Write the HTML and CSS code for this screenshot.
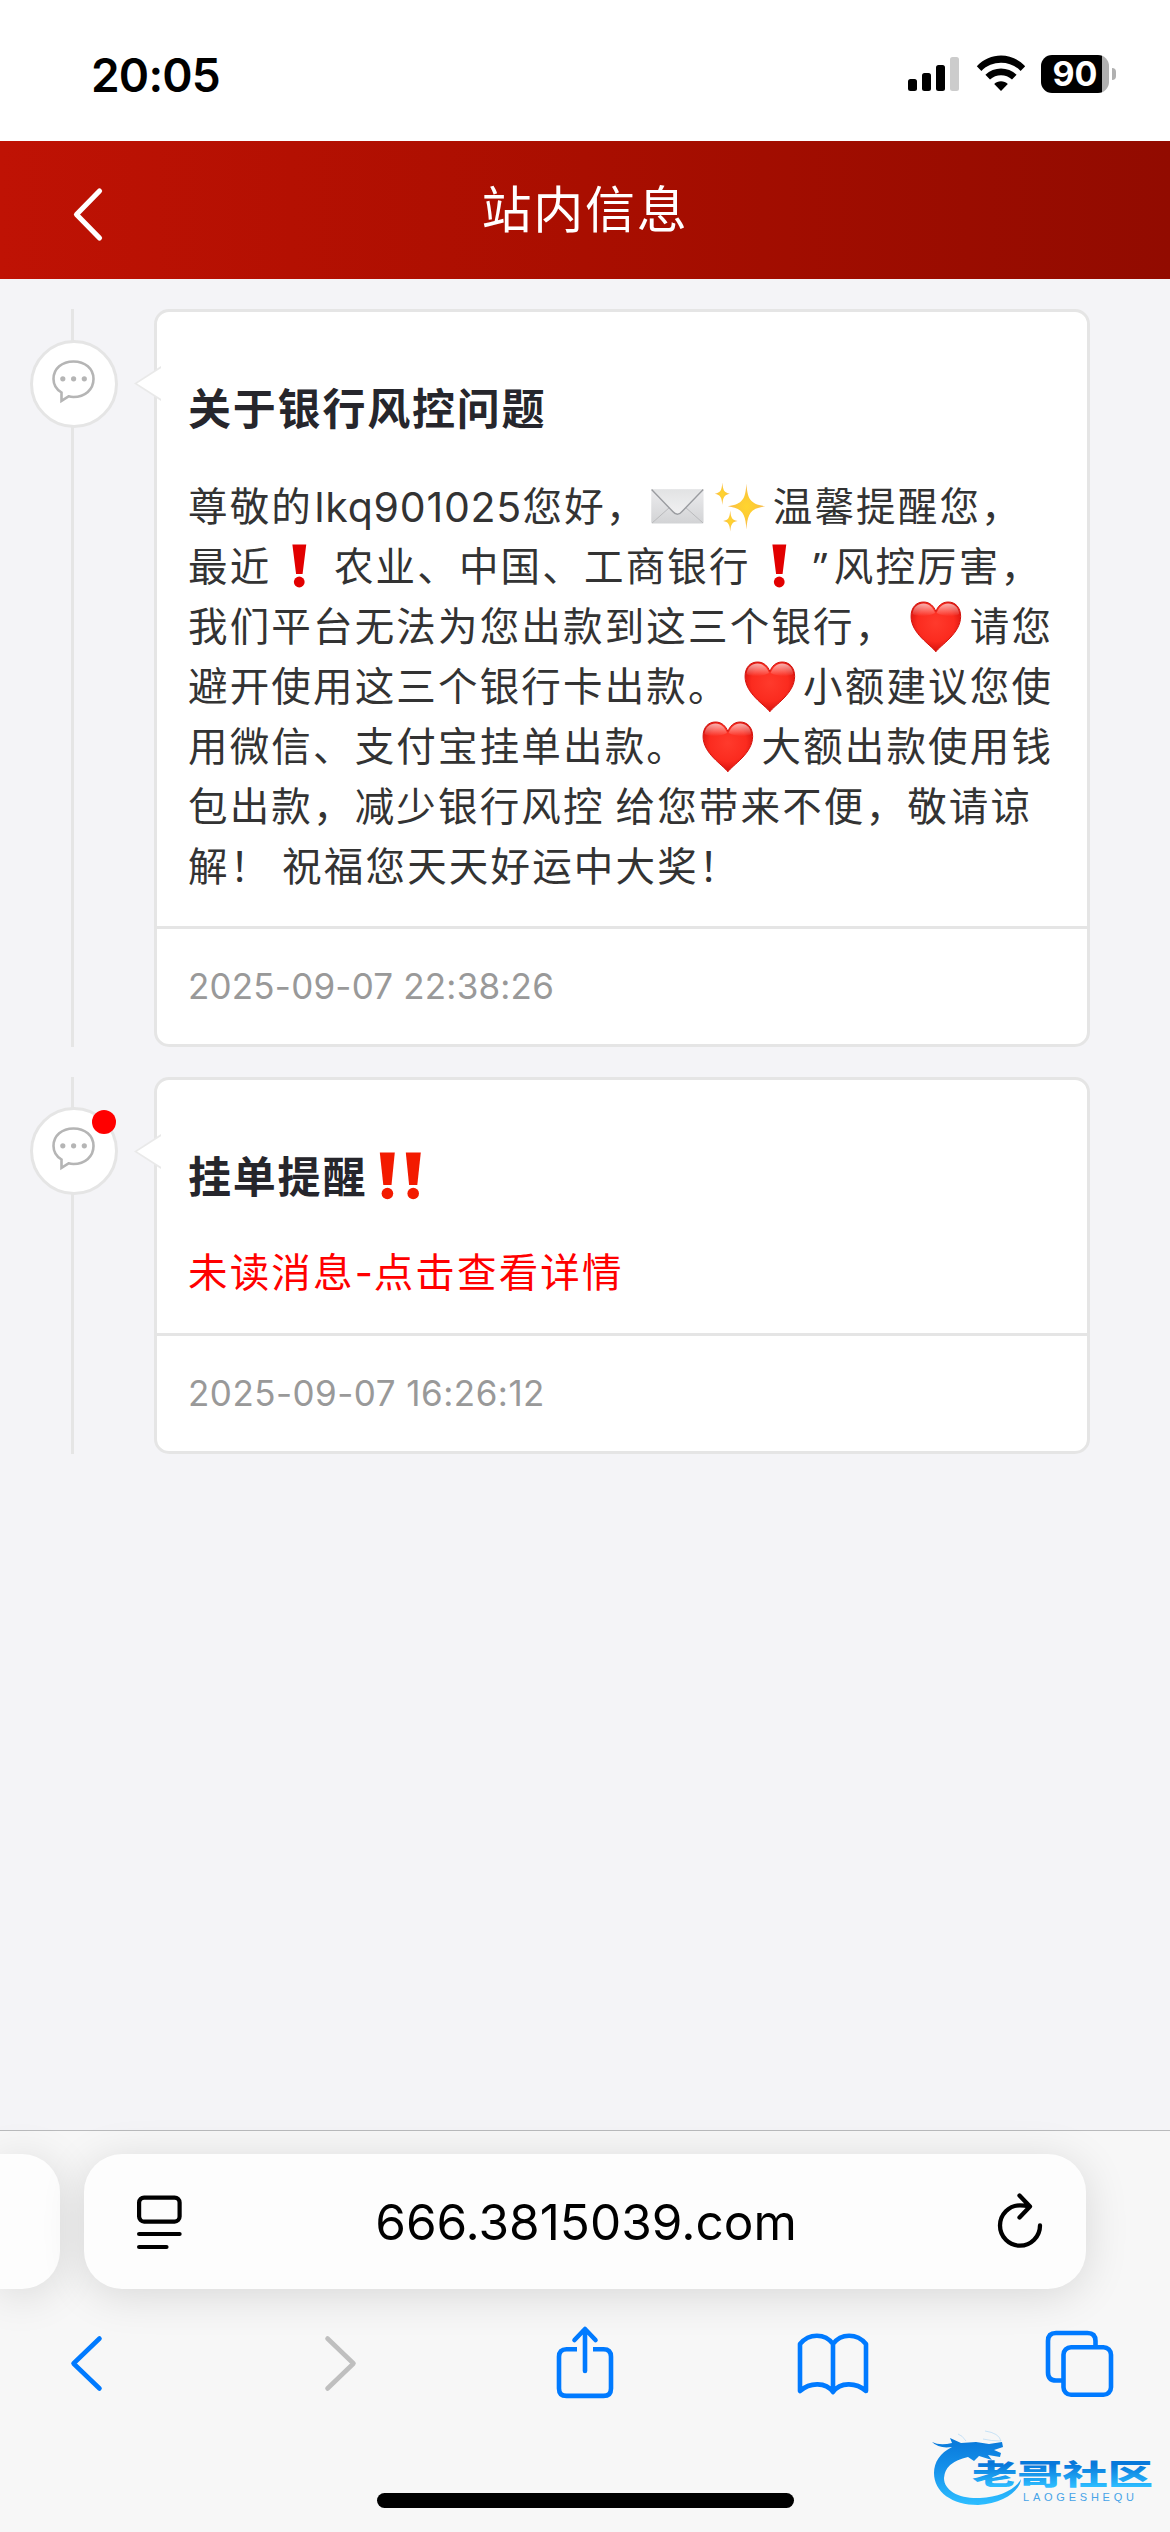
FILE: index.html
```html
<!DOCTYPE html>
<html lang="zh-CN">
<head>
<meta charset="utf-8">
<title>站内信息</title>
<link rel="stylesheet" href="styles.css">
</head>
<body>
<svg class="defs" width="0" height="0" aria-hidden="true">
  <defs>
    <radialGradient id="heartFill" cx="50%" cy="42%" r="62%">
      <stop offset="0" stop-color="#ff3a2c"/><stop offset=".6" stop-color="#fb2b1f"/><stop offset="1" stop-color="#cf0c08"/>
    </radialGradient>
    <linearGradient id="heartShine" x1="0" y1="0" x2="0" y2="1">
      <stop offset="0" stop-color="#fff" stop-opacity=".65"/><stop offset="1" stop-color="#fff" stop-opacity="0"/>
    </linearGradient>
    <linearGradient id="paper" x1="0" y1="0" x2="0" y2="1">
      <stop offset="0" stop-color="#ececee"/><stop offset="1" stop-color="#d2d3d5"/>
    </linearGradient>
    <linearGradient id="flap" x1="0" y1="0" x2="0" y2="1">
      <stop offset="0" stop-color="#e2e3e4"/><stop offset="1" stop-color="#f1f1f2"/>
    </linearGradient>
    <radialGradient id="gold">
      <stop offset="0" stop-color="#ffd52e"/><stop offset=".45" stop-color="#fdcb35"/><stop offset="1" stop-color="#f7b955"/>
    </radialGradient>
    <symbol id="heart" viewBox="0 0 62.5 60">
      <path d="M28.8 54.8C24 48 4 36.500 4 19.500C4 10 9.500 5 16.500 5C23 5 27 9.500 28.800 14.500C30.600 9.500 34.600 5 41.100 5C48 5 53.600 10 53.600 19.500C53.600 36.500 33.600 48 28.800 54.800Z" fill="url(#heartFill)" stroke="#d3120c" stroke-width="1"/>
      <path d="M5.500 17C6 10 11 6.500 16.500 6.500C22 6.500 26 10.500 28 16C20 20 10 20 5.500 17Z" fill="url(#heartShine)"/>
      <path d="M52.100 17C51.600 10 46.600 6.500 41.100 6.500C35.600 6.500 31.600 10.500 29.600 16C37.600 20 47.600 20 52.100 17Z" fill="url(#heartShine)"/>
    </symbol>
    <symbol id="bang" viewBox="0 0 62.5 60">
      <path d="M21.300 7.500H35.200L31.500 37H25Z" fill="#e20000"/><circle cx="28.200" cy="45" r="5.400" fill="#e20000"/>
    </symbol>
    <symbol id="envelope" viewBox="0 0 62.5 60">
      <rect x="3.200" y="12" width="52.300" height="34.500" rx="1.500" fill="url(#paper)"/>
      <path d="M4 46L22 30M55 46L37 30" stroke="#b9babc" stroke-width="1" fill="none"/>
      <path d="M3.500 12.500H55.200L34 34.500Q29.300 40 24.700 34.500Z" fill="url(#flap)"/>
      <path d="M3.500 12.500L24.700 34.500Q29.300 40 34 34.500L55.200 12.500" fill="none" stroke="#9a9ca0" stroke-width="1.400"/>
    </symbol>
    <symbol id="sparkles" viewBox="0 0 62.5 60">
      <g fill="url(#gold)">
        <path d="M36.400 6.500C37.500 22 40 27 55.200 29.300C40 31.500 37.500 37 36.400 52.500C35.300 37 33 31.500 17.800 29.300C33 27 35.300 22 36.400 6.500Z"/>
        <path d="M12.300 5.500C13 13.500 14 15.500 19.800 16.700C14 18 13 20 12.300 28C11.600 20 10.600 18 4.800 16.700C10.600 15.500 11.600 13.500 12.300 5.500Z"/>
        <path d="M20.200 33.500C20.900 41 22 43 27.500 44C22 45.200 20.900 47 20.200 54.500C19.500 47 18.500 45.200 13 44C18.500 43 19.500 41 20.200 33.500Z"/>
      </g>
    </symbol>
    <symbol id="chat" viewBox="0 0 88 88">
      <g fill="none" stroke="#b5b5b5" stroke-width="2.600" stroke-linejoin="miter">
        <path d="M31.500 52.500V60.800L38.500 56.300C40.500 56.900 42 57 43.500 57C55 57 63.500 49.500 63.500 39C63.500 28.500 55 21.500 43.500 21.500C32 21.500 23.500 28.500 23.500 39C23.500 45 26.500 49.500 31.500 52.500Z"/>
      </g>
      <g fill="#b5b5b5"><circle cx="32.800" cy="38.800" r="2.600"/><circle cx="43.600" cy="38.800" r="2.600"/><circle cx="54.300" cy="38.800" r="2.600"/></g>
    </symbol>
  </defs>
</svg>

<header class="status">
  <div class="time">20:05</div>
  <div class="status-icons">
    <svg width="52" height="40" viewBox="0 0 52 40">
      <rect x="0" y="25" width="9" height="12" rx="2.500"/><rect x="14" y="19" width="9" height="18" rx="2.500"/><rect x="28" y="11" width="9" height="26" rx="2.500"/><rect x="42" y="3" width="9" height="34" rx="2.500" fill="#ccc"/>
    </svg>
    <svg width="50" height="40" viewBox="0 0 50 40">
      <path d="M25 37L18.200 29.900C20 28.200 22.400 27.200 25 27.200C27.600 27.200 30 28.200 31.800 29.900Z"/>
      <path d="M9.400 20.800C18 12.400 32 12.400 40.600 20.800L36 25.600C30 19.800 20 19.800 14 25.600Z"/>
      <path d="M.8 12.200C14 -2 36 -2 49.200 12.200L44.600 16.900C34 6 16 6 5.400 16.900Z"/>
    </svg>
    <div class="battery"><span>90</span></div>
  </div>
</header>

<nav class="titlebar">
  <svg class="back" width="32" height="56" viewBox="0 0 32 56"><path d="M27.500 5L4.500 28.500L27.500 52" fill="none" stroke="#fff" stroke-width="5.200" stroke-linecap="round" stroke-linejoin="round"/></svg>
  <h1>站内信息</h1>
</nav>

<main class="messages">
  <article class="message">
    <div class="rail"><div class="badge"><svg width="88" height="88"><use href="#chat"/></svg></div></div>
    <section class="card">
      <div class="content">
        <h2>关于银行风控问题</h2>
        <p>尊敬的<span class="latin">lkq901025</span>您好，<svg class="emoji"><use href="#envelope"/></svg><svg class="emoji"><use href="#sparkles"/></svg>温馨提醒您，<br>最近<svg class="emoji"><use href="#bang"/></svg>农业、中国、工商银行<svg class="emoji"><use href="#bang"/></svg><span class="quote">”</span>风控厉害，<br>我们平台无法为您出款到这三个银行， <svg class="emoji"><use href="#heart"/></svg>请您<br>避开使用这三个银行卡出款。 <svg class="emoji"><use href="#heart"/></svg>小额建议您使<br>用微信、支付宝挂单出款。 <svg class="emoji"><use href="#heart"/></svg>大额出款使用钱<br>包出款，减少银行风控 给您带来不便，敬请谅<br>解！ 祝福您天天好运中大奖！</p>
      </div>
      <footer><time>2025-09-07 22:38:26</time></footer>
    </section>
  </article>
  <article class="message compact">
    <div class="rail"><div class="badge"><svg width="88" height="88"><use href="#chat"/></svg><i class="dot"></i></div></div>
    <section class="card">
      <div class="content">
        <h2>挂单提醒<svg class="bangs" viewBox="0 0 62 60"><g fill="#f31a00"><path d="M12.800 5.500H27.800L24.500 38H16.300Z"/><circle cx="20.400" cy="46.500" r="5.800"/><path d="M38.800 5.500H53.800L50.300 38H42.100Z"/><circle cx="46.200" cy="46.500" r="5.800"/></g></svg></h2>
        <p class="unread">未读消息<span class="dash">-</span>点击查看详情</p>
      </div>
      <footer><time>2025-09-07 16:26:12</time></footer>
    </section>
  </article>
</main>

<footer class="browser">
  <div class="tabs">
    <div class="tab previous"></div>
    <div class="tab address">
      <svg width="48" height="60" viewBox="0 0 48 60" fill="none" stroke="#000" stroke-width="4.200" stroke-linecap="round"><rect x="4.100" y="5.600" width="40.500" height="24" rx="5"/><path d="M4.100 42H44.600M4.100 55H31.500"/></svg>
      <span class="url">666.3815039.com</span>
      <svg width="48" height="60" viewBox="0 0 48 60" fill="none" stroke="#000" stroke-width="4.300" stroke-linecap="round" stroke-linejoin="round"><path d="M44 33.500A20 20.200 0 1 1 24 13.300Q28.500 13.300 33.500 14.500M23.500 3.500L34 14.500L23.500 25.500"/></svg>
    </div>
  </div>
  <div class="toolbar">
    <svg width="36" height="80" viewBox="0 0 36 80"><path d="M31.500 18.500L5.500 43.500L31.500 68.500" /></svg>
    <svg class="off" width="36" height="80" viewBox="0 0 36 80"><path d="M4.500 18.500L30.500 43.500L4.500 68.500"/></svg>
    <svg width="60" height="80" viewBox="0 0 60 80"><path d="M22 29.200H11.500Q4 29.200 4 36.700V68.400Q4 75.900 11.500 75.900H48.500Q56 75.900 56 68.400V36.700Q56 29.200 48.500 29.200H38" class="butt"/><path d="M30 51V10M19.500 20L30 9L40.500 20"/></svg>
    <svg width="74" height="80" viewBox="0 0 74 80"><path d="M37 72C30 62 14 62 4 71V24C13 13 29 13 37 24C45 13 61 13 70 24V71C60 62 44 62 37 72V24"/></svg>
    <svg width="70" height="80" viewBox="0 0 70 80"><rect x="18.500" y="27.300" width="47.500" height="47.500" rx="7.500"/><path d="M17 60.500H11Q3 60.500 3 52.500V21Q3 13 11 13H42.500Q50.500 13 50.500 21V25" class="butt"/></svg>
  </div>
  <div class="home"></div>
  <svg class="watermark" width="240" height="90" viewBox="0 0 240 90">
    <defs><linearGradient id="blue" gradientUnits="userSpaceOnUse" x1="0" y1="18" x2="0" y2="82"><stop offset="0" stop-color="#0878da"/><stop offset=".45" stop-color="#1590ea"/><stop offset="1" stop-color="#2cbcff"/></linearGradient>
    <linearGradient id="blueText" gradientUnits="userSpaceOnUse" x1="0" y1="38" x2="0" y2="69"><stop offset="0" stop-color="#0878da"/><stop offset="1" stop-color="#2cbcff"/></linearGradient></defs>
    <path fill="url(#blue)" d="M2 21Q10 25 22 22L20 17L31 22L46 21L59 23L72 21L73 26L64 29L71 32L70 36L58 34L62 39L49 35L44 40L38 36Q15 41 14 57C14 70 30 78 50 77C70 76 86 68 91 58C90 70 73 83 48 84C22 84 4 71 4 52C4 41 10 32 22 26Q9 28 2 21Z"/>
    <path fill="none" stroke="#8fc8f4" stroke-width="1" opacity=".45" d="M36 20Q32 14 28 13M53 18Q61 20 71 20Q69 12 55 10"/>
    <text x="42" y="66.500" textLength="181" lengthAdjust="spacingAndGlyphs" class="brand">老哥社区</text>
    <text x="93" y="79.500" textLength="111" class="brand-sub">LAOGESHEQU</text>
  </svg>
</footer>
</body>
</html>
```

FILE: styles.css
```css
* { box-sizing: border-box; margin: 0; padding: 0; }

body {
  width: 1170px;
  height: 2532px;
  display: flex;
  flex-direction: column;
  overflow: hidden;
  background: #f4f4f7;
  font-family: Inter, "Noto Sans CJK SC", sans-serif;
  color: #333;
}

svg { display: block; flex: none; }
.defs { position: absolute; }

.status {
  height: 141px;
  flex: none;
  display: flex;
  justify-content: space-between;
  padding: 54px 54px 0 91px;
  background: #fff;
  color: #000;
}
.time { font-size: 46px; line-height: 42px; font-weight: 600; letter-spacing: -.8px; }
.status-icons { display: flex; gap: 16px; }
.battery {
  position: relative;
  width: 68px;
  height: 38px;
  margin: 1px 7px 0 -1px;
  border-radius: 11px;
  background: linear-gradient(90deg, #000 61px, #b0b0b0 61px);
  color: #fff;
  font-size: 34px;
  line-height: 38px;
  font-weight: 700;
  text-align: center;
}
.battery::after {
  content: "";
  position: absolute;
  left: 71px;
  top: 13px;
  width: 4px;
  height: 12px;
  border-radius: 0 4px 4px 0;
  background: #b0b0b0;
}

.titlebar {
  height: 138px;
  flex: none;
  display: grid;
  grid-template-columns: 102px 1fr 102px;
  background: linear-gradient(90deg, #bf1204, #a90e00 50%, #920b00);
  color: #fff;
}
.back { margin: 45px 0 0 72px; }
h1 {
  font-size: 50px;
  line-height: 138px;
  font-weight: 400;
  letter-spacing: 1.700px;
  text-align: center;
}

.messages {
  flex: 1;
  display: flex;
  flex-direction: column;
  gap: 30px;
  padding: 30px 80px 0 30px;
}
.message { display: flex; }
.rail {
  width: 124px;
  flex: none;
  padding-top: 31px;
  background: linear-gradient(#e5e5e5, #e5e5e5) 41px 0 / 3px 100% no-repeat;
}
.badge {
  position: relative;
  width: 88px;
  height: 88px;
  border: 3px solid #e5e5e5;
  border-radius: 50%;
  background: #fff;
}
.badge svg { margin: -3px; }
.dot {
  position: absolute;
  right: -1px;
  top: 0;
  width: 24px;
  height: 24px;
  border-radius: 50%;
  background: #f00;
}
.card {
  position: relative;
  flex: 1;
  border: 3px solid #e5e5e5;
  border-radius: 15px;
  background: #fff;
}
.card::before {
  content: "";
  position: absolute;
  left: -23px;
  top: 54px;
  width: 27px;
  height: 35px;
  background: #e9e9e9;
  clip-path: polygon(100% 0, 0 50%, 100% 100%);
}
.card::after {
  content: "";
  position: absolute;
  left: -20px;
  top: 55.500px;
  width: 25px;
  height: 32px;
  background: #fff;
  clip-path: polygon(100% 0, 0 50%, 100% 100%);
}
.content { padding: 67px 0 29px 31px; }
h2 {
  display: flex;
  height: 60px;
  margin-bottom: 38px;
  font-size: 43px;
  line-height: 60px;
  font-weight: 700;
  letter-spacing: 1.800px;
  color: #26262c;
}
.bangs { width: 62px; height: 60px; }
p {
  font-size: 39.500px;
  line-height: 60px;
  letter-spacing: 2.170px;
  word-spacing: -2.500px;
  white-space: nowrap;
}
.emoji { display: inline-block; width: 62.600px; height: 60px; vertical-align: top; }
.latin {
  display: inline-block;
  width: 209.500px;
  padding-left: 1.500px;
  font-size: 41px;
  letter-spacing: .8px;
  vertical-align: top;
}
.quote { display: inline-block; width: 20.500px; font-family: "Noto Sans", sans-serif; vertical-align: top; }
.dash { display: inline-block; width: 19px; vertical-align: top; }
.unread { color: #f00; }
.card footer {
  height: 118px;
  padding-left: 31px;
  border-top: 3px solid #e5e5e5;
  font-size: 35px;
  line-height: 115px;
  letter-spacing: .2px;
  color: #999;
}
.compact .rail { padding-top: 30px; }
.compact .content { padding-bottom: 30px; }
.compact h2 { margin-bottom: 36px; }
.compact footer { letter-spacing: .48px; }

.browser {
  position: relative;
  height: 402px;
  flex: none;
  border-top: 1px solid #b9babc;
  background: #f7f7f7;
  color: #000;
}
.tabs { display: flex; gap: 24px; height: 182px; padding-top: 23px; overflow: clip; overflow-clip-margin: 60px; }
.tab { height: 135px; background: #fdfdfd; box-shadow: 0 6px 44px rgba(0, 0, 0, .13); }
.previous { width: 60px; border-radius: 0 38px 38px 0; }
.address {
  width: 1002px;
  display: flex;
  align-items: center;
  justify-content: space-between;
  padding: 0 42px 0 51px;
  border-radius: 38px;
}
.url { font-size: 49.500px; line-height: 60px; margin-right: 7px; }
.toolbar {
  display: grid;
  grid-template-columns: 255px 232px 241px 249px 70px;
  padding: 7px 55px 0 68px;
}
.toolbar svg {
  fill: none;
  stroke: #007aff;
  stroke-width: 4.600;
  stroke-linecap: round;
  stroke-linejoin: round;
}
.toolbar .butt { stroke-linecap: butt; }
.toolbar .off { stroke: #bfbfbf; }
.home { width: 417px; height: 15px; margin: 93px auto 0; border-radius: 8px; background: #000; }
.watermark { position: absolute; left: 930px; top: 290px; }
.brand {
  font: 900 41px "Noto Sans CJK SC", sans-serif;
  transform: translateY(17px) scaleY(.7);
  fill: url(#blueText);
}
.brand-sub { font: 400 11px "Liberation Sans", sans-serif; fill: #46a3e8; }
```
